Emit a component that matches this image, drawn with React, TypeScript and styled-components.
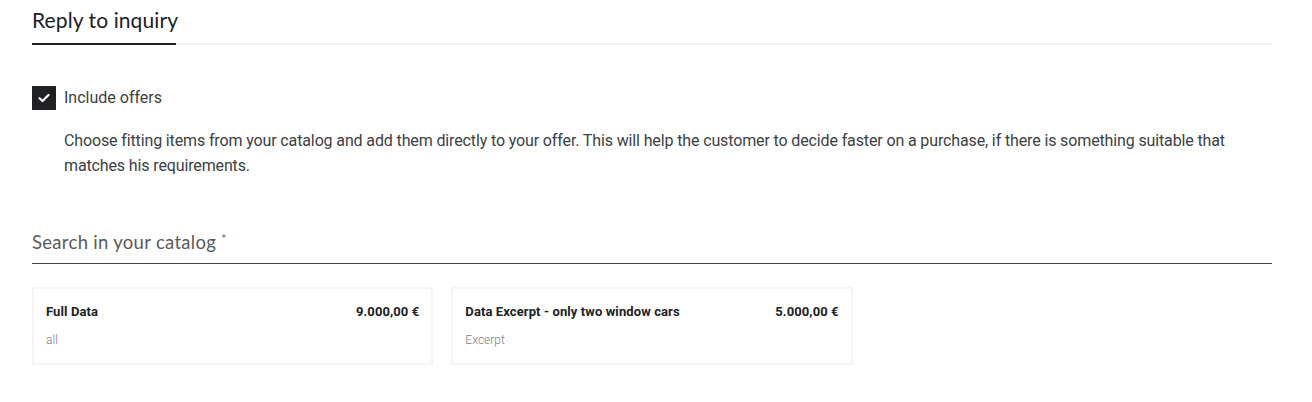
import React from "react";
import styled, { createGlobalStyle } from "styled-components";

const Global = createGlobalStyle`
  html, body { margin: 0; padding: 0; background: #fff; }
  body { font-family: Roboto, "Liberation Sans", Arial, sans-serif; color: #333; }
`;

const Page = styled.div`
  padding: 0 40px 0 32px;
`;

const TabBar = styled.div`
  display: flex;
  border-bottom: 2px solid #f0f0f0;
`;

const Tab = styled.div`
  font-family: Lato, "Open Sans", sans-serif;
  font-weight: 400;
  font-size: 21px;
  line-height: 28px;
  letter-spacing: 0.1px;
  color: #202124;
  padding: 6px 0 9px;
  width: 144px;
  white-space: nowrap;
  border-bottom: 2px solid #202124;
  margin-bottom: -2px;
`;

const CheckRow = styled.label`
  display: flex;
  align-items: center;
  gap: 8px;
  margin-top: 41px;
  font-size: 16px;
  line-height: 24px;
  color: #3c4043;
`;

const Box = styled.span<{ $checked: boolean }>`
  width: 24px;
  height: 24px;
  background: ${(p) => (p.$checked ? "#202124" : "#fff")};
  display: flex;
  align-items: center;
  justify-content: center;
`;

const Description = styled.p`
  margin: 18px 0 0;
  padding-left: 32px;
  font-size: 16px;
  line-height: 25px;
  letter-spacing: -0.13px;
  color: #3c4043;
`;

const SearchField = styled.div`
  margin-top: 52px;
  padding-bottom: 9px;
  border-bottom: 1px solid #444;
  font-family: Lato, "Open Sans", sans-serif;
  font-weight: 400;
  font-size: 18.5px;
  line-height: 24px;
  letter-spacing: 0.3px;
  color: #5a5a5a;
`;

const Required = styled.span`
  font-size: 12px;
  vertical-align: top;
  margin-left: 5px;
  line-height: 18px;
`;

const Grid = styled.div`
  display: grid;
  grid-template-columns: repeat(3, 1fr);
  gap: 18px;
  margin-top: 23px;
`;

const Card = styled.div`
  border: 2px solid #f5f5f5;
  padding: 15px 12px 15px;
  height: 78px;
  box-sizing: border-box;
`;

const CardHead = styled.div`
  display: flex;
  justify-content: space-between;
  font-size: 13px;
  line-height: 16px;
  font-weight: 700;
  letter-spacing: 0.1px;
  color: #202124;
`;

const CardSub = styled.div`
  margin-top: 12px;
  font-size: 12px;
  line-height: 16px;
  font-weight: 300;
  color: #808080;
`;

const items = [
  { title: "Full Data", price: "9.000,00 €", sub: "all" },
  { title: "Data Excerpt - only two window cars", price: "5.000,00 €", sub: "Excerpt" },
];

export default function App() {
  return (
    <Page>
      <Global />
      <TabBar>
        <Tab>Reply to inquiry</Tab>
      </TabBar>
      <CheckRow>
        <Box $checked>
          <svg width="12" height="10" viewBox="0 0 12 10">
            <path d="M1.5 5.2 L4.5 8 L10.5 2" fill="none" stroke="#fff" strokeWidth="2.2" strokeLinecap="round" strokeLinejoin="round" />
          </svg>
        </Box>
        Include offers
      </CheckRow>
      <Description>
        Choose fitting items from your catalog and add them directly to your offer. This will help the customer to decide faster on a purchase, if there is something suitable that matches his requirements.
      </Description>
      <SearchField>
        Search in your catalog<Required>*</Required>
      </SearchField>
      <Grid>
        {items.map((it) => (
          <Card key={it.title}>
            <CardHead>
              <span>{it.title}</span>
              <span>{it.price}</span>
            </CardHead>
            <CardSub>{it.sub}</CardSub>
          </Card>
        ))}
      </Grid>
    </Page>
  );
}
